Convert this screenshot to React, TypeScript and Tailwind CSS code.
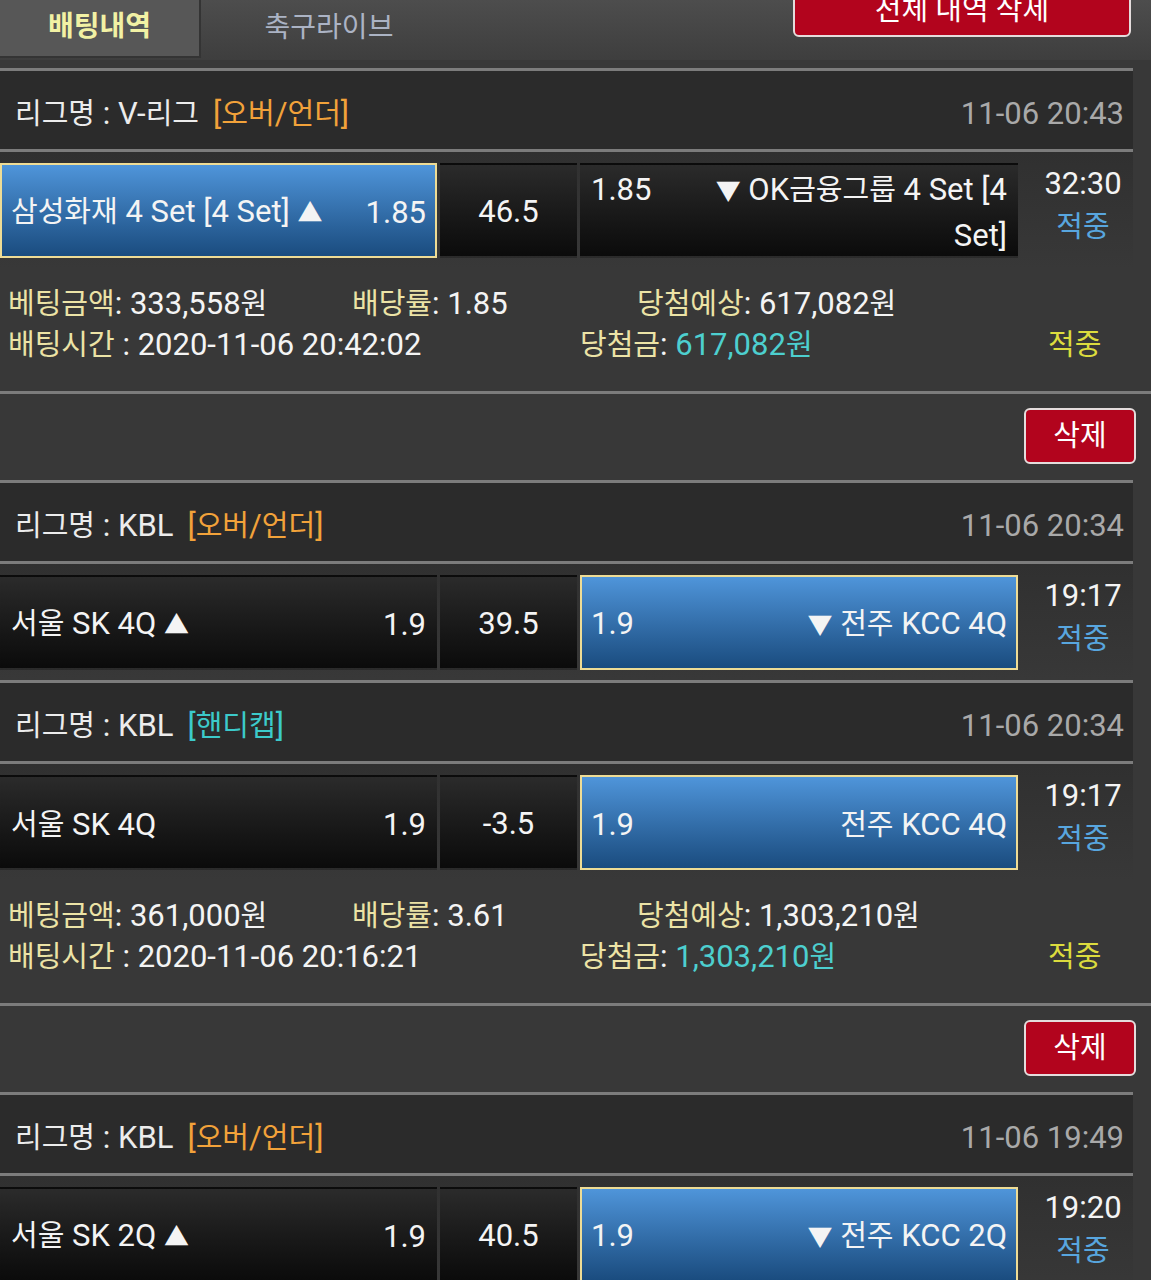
import React from 'react';

type Game = {
  league: string;
  kind: string;
  kindColor: string;
  date: string;
  home: string;
  homeOdds: string;
  line: string;
  awayOdds: string;
  away: string;
  pick: 'home' | 'away';
  clock: string;
};

type Slip = {
  games: Game[];
  amount?: string;
  rate?: string;
  expected?: string;
  placedAt?: string;
  win?: string;
};

const slips: Slip[] = [
  {
    games: [
      {
        league: 'V-리그',
        kind: '오버/언더',
        kindColor: 'text-[#f2a23a]',
        date: '11-06 20:43',
        home: '삼성화재 4 Set [4 Set] ▲',
        homeOdds: '1.85',
        line: '46.5',
        awayOdds: '1.85',
        away: '▼ OK금융그룹 4 Set [4 Set]',
        pick: 'home',
        clock: '32:30',
      },
    ],
    amount: '333,558원',
    rate: '1.85',
    expected: '617,082원',
    placedAt: '2020-11-06 20:42:02',
    win: '617,082원',
  },
  {
    games: [
      {
        league: 'KBL',
        kind: '오버/언더',
        kindColor: 'text-[#f2a23a]',
        date: '11-06 20:34',
        home: '서울 SK 4Q ▲',
        homeOdds: '1.9',
        line: '39.5',
        awayOdds: '1.9',
        away: '▼ 전주 KCC 4Q',
        pick: 'away',
        clock: '19:17',
      },
      {
        league: 'KBL',
        kind: '핸디캡',
        kindColor: 'text-[#3ccaca]',
        date: '11-06 20:34',
        home: '서울 SK 4Q',
        homeOdds: '1.9',
        line: '-3.5',
        awayOdds: '1.9',
        away: '전주 KCC 4Q',
        pick: 'away',
        clock: '19:17',
      },
    ],
    amount: '361,000원',
    rate: '3.61',
    expected: '1,303,210원',
    placedAt: '2020-11-06 20:16:21',
    win: '1,303,210원',
  },
  {
    games: [
      {
        league: 'KBL',
        kind: '오버/언더',
        kindColor: 'text-[#f2a23a]',
        date: '11-06 19:49',
        home: '서울 SK 2Q ▲',
        homeOdds: '1.9',
        line: '40.5',
        awayOdds: '1.9',
        away: '▼ 전주 KCC 2Q',
        pick: 'away',
        clock: '19:20',
      },
    ],
  },
];

// hangul runs get their own size (the phone font draws them narrower than latin),
// the arrows are drawn smaller than the CJK fallback would make them
const ko = (text: string) =>
  text.split(/([\uAC00-\uD7A3]+|[▲▼])/).map((part, i) => {
    if (i % 2 === 0) return part;
    if (part === '▲' || part === '▼')
      return (
        <span key={i} className="text-[25px]">
          {part}
        </span>
      );
    return (
      <span key={i} className="text-[29px]">
        {part}
      </span>
    );
  });

const cellBase = 'h-[95px] border-2 pt-[4px]';
const darkCell = 'bg-linear-to-b from-[#2b2b2b] to-[#0b0b0b] border-transparent';
const pickedCell = 'bg-linear-to-b from-[#4f95da] to-[#1a4c7f] border-[#eedc95]';

const GameHeader: React.FC<{ game: Game }> = ({ game }) => (
  <div className="w-[1133px] h-[81px] border-t-[3px] border-[#7c7c7c] bg-[#2b2b2b] flex items-center justify-between pt-[7px] pl-[15px] pr-[9px] leading-[41px]">
    <div className="text-[#ececec] whitespace-nowrap">
      {ko(`리그명 : ${game.league}`)}
      <span className={`ml-[14px] ${game.kindColor}`}>{ko(`[${game.kind}]`)}</span>
    </div>
    <div className="text-[#a9a9a9]">{game.date}</div>
  </div>
);

const GameRow: React.FC<{ game: Game }> = ({ game }) => (
  <div className="w-[1133px] h-[119px] border-t-[3px] border-[#7c7c7c] bg-linear-to-b from-[#303030] to-[#383838] pt-[11px] flex items-start gap-[3px] text-[#f4f4f4]">
    <div
      className={`${cellBase} w-[437px] flex items-center justify-between px-[9px] leading-[44px] ${
        game.pick === 'home' ? pickedCell : darkCell
      }`}
    >
      <span className="whitespace-nowrap">{ko(game.home)}</span>
      <span>{game.homeOdds}</span>
    </div>
    <div className={`${cellBase} w-[137px] flex items-center justify-center ${darkCell}`}>
      {game.line}
    </div>
    <div
      className={`${cellBase} w-[438px] flex items-center px-[9px] leading-[44px] ${
        game.pick === 'away' ? pickedCell : darkCell
      }`}
    >
      <div className="flex w-full items-start justify-between gap-4">
        <span className="shrink-0">{game.awayOdds}</span>
        <span className="text-right">{ko(game.away)}</span>
      </div>
    </div>
    <div className="flex-1 flex flex-col items-center pl-[12px] -mt-[1px]">
      <span className="h-[43px] leading-[43px]">{game.clock}</span>
      <span className="h-[43px] leading-[43px] text-[#58a6df]">{ko('적중')}</span>
    </div>
  </div>
);

const Label: React.FC<{ children: string }> = ({ children }) => (
  <span className="text-[#ece3a6]">{ko(children)}</span>
);

const SlipInfo: React.FC<{ slip: Slip }> = ({ slip }) => (
  <div className="h-[123px] pt-[15px] pl-[8px] leading-[41px] text-[#f4f4f4] whitespace-nowrap">
    <div className="h-[41px] flex items-center">
      <div className="w-[344px]">
        <Label>베팅금액</Label>: {ko(slip.amount ?? '')}
      </div>
      <div className="w-[285px]">
        <Label>배당률</Label>: {slip.rate}
      </div>
      <div>
        <Label>당첨예상</Label>: {ko(slip.expected ?? '')}
      </div>
    </div>
    <div className="h-[41px] flex items-center">
      <div className="w-[572px]">
        <Label>배팅시간</Label> : {slip.placedAt}
      </div>
      <div className="w-[468px]">
        <Label>당첨금</Label>: <span className="text-[#4dcfcf]">{ko(slip.win ?? '')}</span>
      </div>
      <div className="text-[#dcdc3e]">{ko('적중')}</div>
    </div>
  </div>
);

const DeleteBar: React.FC = () => (
  <div className="h-[89px] border-t-[3px] border-[#7c7c7c] flex justify-end items-start pt-[14px] pr-[15px]">
    <button className="w-[112px] h-[56px] rounded-[6px] border-2 border-[#e4dcdc] bg-[#b2041d] text-white text-[29px] leading-none">
      삭제
    </button>
  </div>
);

export default function App() {
  return (
    <div className="w-[1151px] min-h-screen overflow-hidden bg-[#383838] text-[31px] font-[Roboto,'Noto_Sans_CJK_KR',sans-serif]">
      <div className="h-[60px] mb-[8px] flex items-start bg-linear-to-b from-[#4d4d4d] to-[#3e3e3e]">
        <div className="w-[201px] h-[58px] flex items-center justify-center pb-[2px] bg-[#575757] border-r-2 border-b-2 border-[#343434] text-[28px] font-bold text-[#f2f1a4]">
          배팅내역
        </div>
        <div className="w-[256px] h-[58px] flex items-center justify-center pb-[2px] text-[28px] text-[#abb3c4]">
          축구라이브
        </div>
        <button className="ml-auto mr-[20px] -mt-[19px] w-[338px] h-[56px] pt-[3px] rounded-[6px] border-2 border-[#e4dcdc] bg-[#b2041d] text-white text-[29px] leading-none">
          전체 내역 삭제
        </button>
      </div>

      {slips.map((slip, s) => (
        <div key={s}>
          {slip.games.map((game, g) => (
            <div key={g}>
              <GameHeader game={game} />
              <GameRow game={game} />
            </div>
          ))}
          {slip.amount && <SlipInfo slip={slip} />}
          {slip.amount && <DeleteBar />}
        </div>
      ))}
    </div>
  );
}
